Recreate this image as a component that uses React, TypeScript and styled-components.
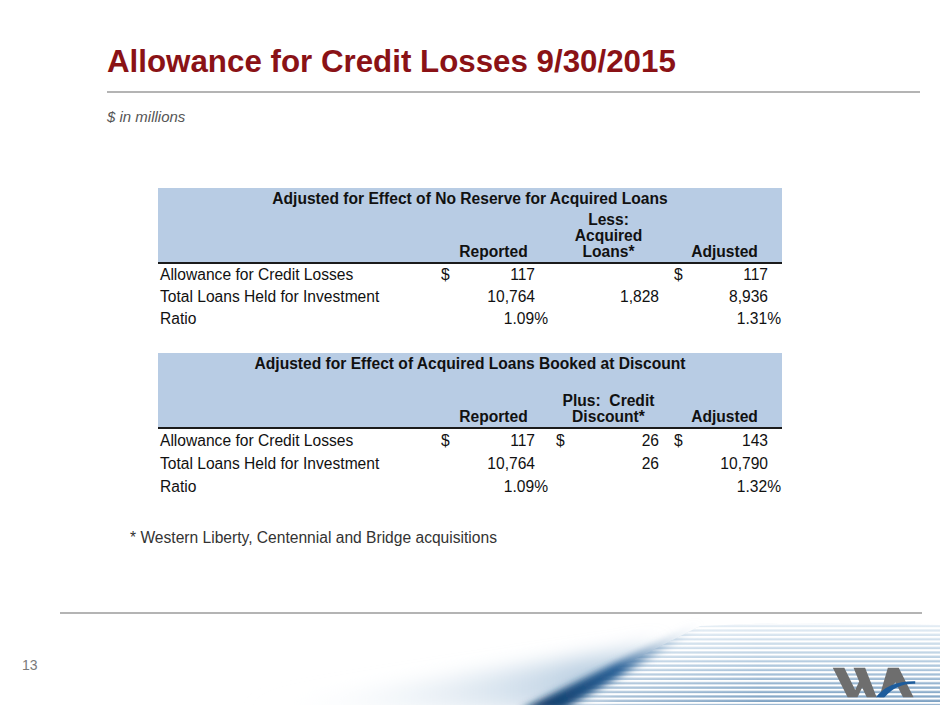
import React from 'react';
import styled, { createGlobalStyle } from 'styled-components';

const GlobalStyle = createGlobalStyle`
  html, body {
    margin: 0;
    padding: 0;
    background: #ffffff;
  }
  body {
    font-family: "Liberation Sans", Arial, sans-serif;
  }
`;

type Cell = { cur?: boolean; v: string };

type TableData = {
  title: string;
  heads: string[];
  rowHeight: number;
  rows: { label: string; cells: Cell[] }[];
};

// left / right padding of each value column, so "$" and numbers sit like the Excel sheet
const COLS = [
  { pl: 4, pr: 15 },
  { pl: 6, pr: 8 },
  { pl: 7, pr: 14 },
];

const TABLES: TableData[] = [
  {
    title: 'Adjusted for Effect of No Reserve for Acquired Loans',
    heads: ['Reported', 'Less:\nAcquired\nLoans*', 'Adjusted'],
    rowHeight: 22,
    rows: [
      {
        label: 'Allowance for Credit Losses',
        cells: [{ cur: true, v: '117' }, { v: '' }, { cur: true, v: '117' }],
      },
      {
        label: 'Total Loans Held for Investment',
        cells: [{ v: '10,764' }, { v: '1,828' }, { v: '8,936' }],
      },
      {
        label: 'Ratio',
        cells: [{ v: '1.09%' }, { v: '' }, { v: '1.31%' }],
      },
    ],
  },
  {
    title: 'Adjusted for Effect of Acquired Loans Booked at Discount',
    heads: ['Reported', 'Plus:  Credit\nDiscount*', 'Adjusted'],
    rowHeight: 23,
    rows: [
      {
        label: 'Allowance for Credit Losses',
        cells: [
          { cur: true, v: '117' },
          { cur: true, v: '26' },
          { cur: true, v: '143' },
        ],
      },
      {
        label: 'Total Loans Held for Investment',
        cells: [{ v: '10,764' }, { v: '26' }, { v: '10,790' }],
      },
      {
        label: 'Ratio',
        cells: [{ v: '1.09%' }, { v: '' }, { v: '1.32%' }],
      },
    ],
  },
];

const Slide = styled.div`
  width: 940px;
  height: 705px;
  display: flex;
  flex-direction: column;
  overflow: hidden;
  background: #ffffff;
`;

const Title = styled.h1`
  margin: 44px 0 0 107px;
  font-size: 31.3px;
  line-height: 36px;
  font-weight: bold;
  color: #8a1216;
  white-space: nowrap;
`;

const Rule = styled.div<{ $left: number; $width: number; $top: number }>`
  margin: ${(p) => p.$top}px 0 0 ${(p) => p.$left}px;
  width: ${(p) => p.$width}px;
  height: 2px;
  background: #b4b4b4;
  flex-shrink: 0;
`;

const Subtitle = styled.div`
  margin: 15px 0 0 107px;
  font-size: 15px;
  line-height: 18px;
  font-style: italic;
  color: #555555;
`;

const Tables = styled.div`
  margin: 62px 0 0 158px;
  width: 624px;
  display: flex;
  flex-direction: column;
  gap: 23px;
`;

const Table = styled.div`
  font-size: 15.6px;
  color: #111111;
`;

const Band = styled.div`
  height: 74px;
  background: #b8cce4;
  border-bottom: 2px solid #1b1b1b;
  display: flex;
  flex-direction: column;
`;

const BandTitle = styled.div`
  height: 22px;
  line-height: 22px;
  text-align: center;
  font-weight: bold;
`;

const Grid = styled.div`
  display: grid;
  grid-template-columns: 279px 113px 117px 115px;
`;

const HeadRow = styled(Grid)`
  flex: 1;
  align-items: end;
  padding-bottom: 2px;
`;

const HeadCell = styled.div`
  text-align: center;
  font-weight: bold;
  line-height: 16px;
`;

const HeadLine = styled.span`
  display: block;
  white-space: pre;
`;

const BodyRow = styled(Grid)<{ $h: number }>`
  height: ${(p) => p.$h}px;
  line-height: ${(p) => p.$h}px;
`;

const Label = styled.div`
  padding-left: 2px;
  white-space: nowrap;
`;

const Value = styled.div<{ $pl: number; $pr: number }>`
  display: flex;
  justify-content: space-between;
  padding: 0 ${(p) => p.$pr}px 0 ${(p) => p.$pl}px;
  white-space: nowrap;
`;

const Footnote = styled.div`
  margin: 31px 0 0 130px;
  font-size: 15.6px;
  line-height: 18px;
  color: #333333;
`;

const Footer = styled.div`
  margin-top: auto;
  display: flex;
  flex-direction: column;
`;

const FooterBand = styled.div`
  position: relative;
  height: 91px;
  display: flex;
  justify-content: space-between;
  align-items: flex-start;
`;

const Backdrop = styled.svg`
  position: absolute;
  inset: 0;
`;

const PageNum = styled.div`
  position: relative;
  margin: 43px 0 0 22px;
  font-size: 14px;
  line-height: 16px;
  color: #7a7a7a;
`;

const Logo = styled.svg`
  position: relative;
  margin: 53px 24px 0 0;
`;

const Swoosh = () => (
  <Backdrop width="940" height="91" viewBox="0 0 940 91">
    <defs>
      <linearGradient id="stripeFill" x1="0" y1="0" x2="0" y2="1">
        <stop offset="0" stopColor="#e6eef5" />
        <stop offset="0.45" stopColor="#b9cfe2" />
        <stop offset="1" stopColor="#7a9fc1" />
      </linearGradient>
      <pattern id="lines" width="20" height="4.4" patternUnits="userSpaceOnUse">
        <rect x="0" y="0" width="20" height="2.1" fill="#ffffff" />
      </pattern>
      <linearGradient id="fadeX" x1="540" y1="0" x2="760" y2="0" gradientUnits="userSpaceOnUse">
        <stop offset="0" stopColor="#fff" stopOpacity="0" />
        <stop offset="0.35" stopColor="#fff" stopOpacity="0.7" />
        <stop offset="1" stopColor="#fff" stopOpacity="1" />
      </linearGradient>
      <mask id="stripeMask">
        <rect x="0" y="0" width="940" height="91" fill="url(#fadeX)" />
      </mask>
      <linearGradient id="streak" x1="530" y1="91" x2="700" y2="10" gradientUnits="userSpaceOnUse">
        <stop offset="0" stopColor="#0f3a66" />
        <stop offset="0.5" stopColor="#2a6197" />
        <stop offset="1" stopColor="#c9dbea" stopOpacity="0" />
      </linearGradient>
      <linearGradient id="wash" x1="240" y1="0" x2="580" y2="0" gradientUnits="userSpaceOnUse">
        <stop offset="0" stopColor="#ffffff" stopOpacity="0" />
        <stop offset="1" stopColor="#b6cce0" stopOpacity="0.9" />
      </linearGradient>
      <filter id="blur4" x="-20%" y="-50%" width="140%" height="200%">
        <feGaussianBlur stdDeviation="3.5" />
      </filter>
      <filter id="blur10" x="-20%" y="-50%" width="140%" height="200%">
        <feGaussianBlur stdDeviation="10" />
      </filter>
    </defs>
    <polygon points="230,96 570,96 660,30 620,38" fill="url(#wash)" filter="url(#blur10)" />
    <g mask="url(#stripeMask)">
      <polygon points="545,91 700,12 780,9 940,11 940,91" fill="url(#stripeFill)" />
      <polygon points="545,91 700,12 780,9 940,11 940,91" fill="url(#lines)" />
    </g>
    <polygon points="520,96 562,96 708,10 698,8" fill="url(#streak)" filter="url(#blur4)" />
  </Backdrop>
);

const WALogo = () => (
  <Logo width="84" height="31" viewBox="93 48 254 94">
    <polygon
      points="95,50 130,50 163,118 175,92 158,50 193,50 228,140 198,140 184,110 170,140 140,140"
      fill="#6e6e6e"
    />
    <polygon points="262,50 295,50 340,140 308,140 285,94 250,140 236,140" fill="#6e6e6e" />
    <path d="M226,140 Q262,90 345,91 L345,99 Q288,97 252,140 Z" fill="#1d5c9c" />
  </Logo>
);

const DataTable = ({ data }: { data: TableData }) => (
  <Table>
    <Band>
      <BandTitle>{data.title}</BandTitle>
      <HeadRow>
        <div />
        {data.heads.map((h) => (
          <HeadCell key={h}>
            {h.split('\n').map((line) => (
              <HeadLine key={line}>{line}</HeadLine>
            ))}
          </HeadCell>
        ))}
      </HeadRow>
    </Band>
    {data.rows.map((row) => (
      <BodyRow key={row.label} $h={data.rowHeight}>
        <Label>{row.label}</Label>
        {row.cells.map((c, i) => {
          const pct = c.v.endsWith('%');
          return (
            <Value key={i} $pl={COLS[i].pl} $pr={pct ? COLS[i].pr - 13 : COLS[i].pr}>
              <span>{c.cur ? '$' : ''}</span>
              <span>{c.v}</span>
            </Value>
          );
        })}
      </BodyRow>
    ))}
  </Table>
);

const App = () => (
  <>
    <GlobalStyle />
    <Slide>
      <Title>Allowance for Credit Losses 9/30/2015</Title>
      <Rule $left={107} $width={813} $top={11} />
      <Subtitle>$ in millions</Subtitle>
      <Tables>
        {TABLES.map((t) => (
          <DataTable key={t.title} data={t} />
        ))}
      </Tables>
      <Footnote>* Western Liberty, Centennial and Bridge acquisitions</Footnote>
      <Footer>
        <Rule $left={60} $width={862} $top={0} />
        <FooterBand>
          <Swoosh />
          <PageNum>13</PageNum>
          <WALogo />
        </FooterBand>
      </Footer>
    </Slide>
  </>
);

export default App;
